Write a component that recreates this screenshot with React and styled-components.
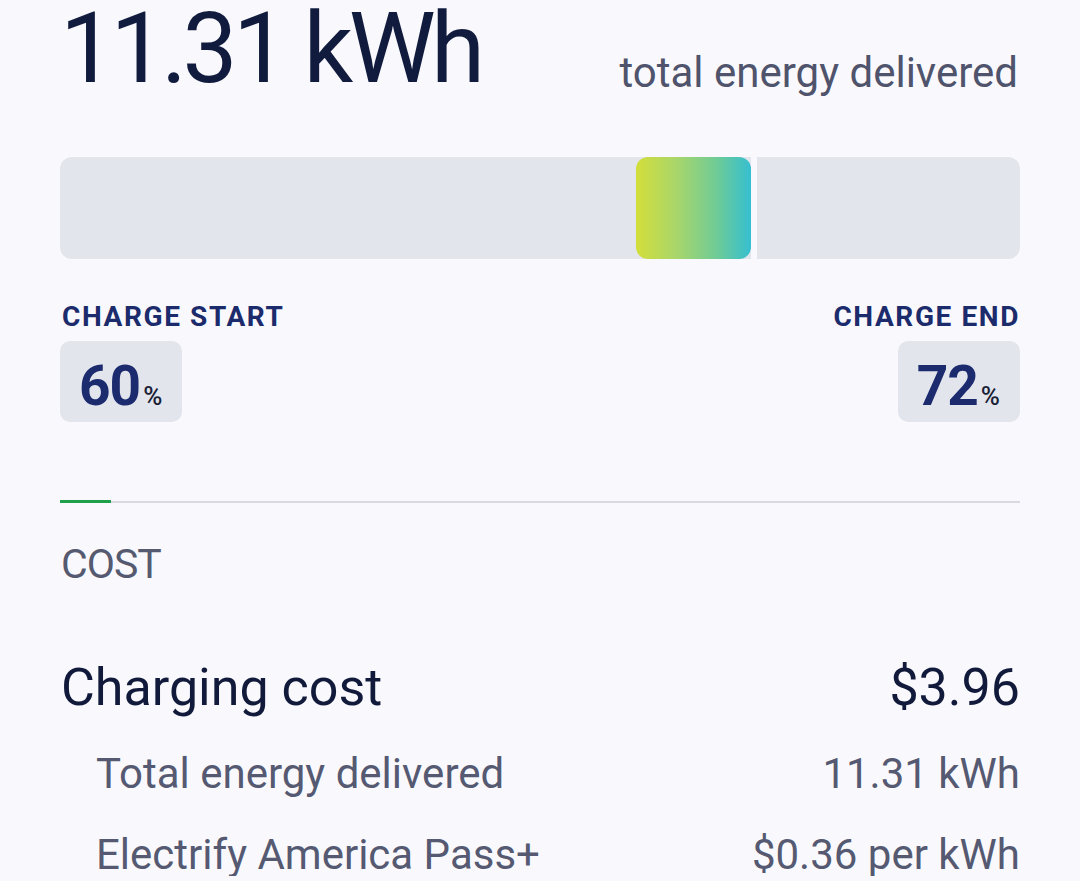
import React from "react";
import styled, { createGlobalStyle } from "styled-components";

const Global = createGlobalStyle`
  html, body { margin: 0; padding: 0; background: #f9f9fd; }
  body { font-family: Roboto, "Noto Sans", "Liberation Sans", sans-serif; overflow: hidden; }
`;

const Page = styled.div`
  padding: 0 60px;
  width: 960px;
  box-sizing: content-box;
`;

const Header = styled.div`
  display: flex;
  justify-content: space-between;
  align-items: flex-start;
`;

const BigValue = styled.div`
  font-size: 98px;
  line-height: 1;
  font-weight: 400;
  letter-spacing: -4.5px;
  color: #111b3d;
`;

const Caption = styled.div`
  font-size: 42px;
  line-height: 1;
  color: #4f546c;
  margin-top: 52px;
  margin-right: 2px;
`;

const Bar = styled.div`
  margin-top: 59px;
  height: 102px;
  border-radius: 12px;
  background: #e3e5ed;
  display: flex;
  overflow: hidden;
`;

const Spacer = styled.div`
  flex: none;
`;

const Fill = styled.div`
  flex: none;
  border-radius: 12px;
  background: linear-gradient(90deg, #d3de3a 0%, #a9d66a 35%, #6fcb96 70%, #36bfd0 100%);
`;

const Marker = styled.div`
  flex: none;
  width: 6px;
  background: #f9f9fd;
`;

const Ends = styled.div`
  display: flex;
  justify-content: space-between;
  margin-top: 44px;
`;

const EndCol = styled.div`
  display: flex;
  flex-direction: column;
  align-items: ${(p) => (p.$right ? "flex-end" : "flex-start")};
  gap: 10px;
`;

const EndLabel = styled.div`
  font-size: 28px;
  line-height: 1;
  font-weight: 700;
  letter-spacing: 1.6px;
  color: #1c2b6b;
  margin-left: ${(p) => (p.$right ? "0" : "2px")};
`;

const Badge = styled.div`
  display: flex;
  align-items: baseline;
  box-sizing: border-box;
  height: 81px;
  padding: 18px 20px 8px 19px;
  border-radius: 10px;
  background: #e3e5ed;
`;

const BadgeNum = styled.span`
  font-size: 55px;
  line-height: 1;
  font-weight: 700;
  letter-spacing: -1px;
  color: #1b2b6e;
`;

const BadgeUnit = styled.span`
  font-size: 26px;
  line-height: 1;
  font-weight: 500;
  color: #1a1f36;
  margin-left: 3px;
`;

const Divider = styled.div`
  display: flex;
  align-items: center;
  height: 3px;
  margin-top: 78px;
`;

const DividerActive = styled.div`
  width: 51px;
  height: 3px;
  background: #21a04b;
`;

const DividerRest = styled.div`
  flex: 1;
  height: 2px;
  background: #d9dae1;
`;

const SectionTitle = styled.div`
  margin-top: 41px;
  font-size: 41px;
  line-height: 1;
  letter-spacing: -1px;
  color: #555a70;
  margin-left: 1px;
`;

const Rows = styled.div`
  margin-top: 77px;
  display: flex;
  flex-direction: column;
  gap: 39px;
`;

const Row = styled.div`
  display: flex;
  justify-content: space-between;
  align-items: baseline;
  font-size: ${(p) => (p.$main ? "52px" : "42px")};
  line-height: 1;
  color: ${(p) => (p.$main ? "#111a3a" : "#555a72")};
  padding-left: ${(p) => (p.$main ? "1px" : "36px")};
`;

const RowLabel = styled.span``;
const RowValue = styled.span``;

const start = 60;
const end = 72;

export default function App() {
  return (
    <>
      <Global />
      <Page>
        <Header>
          <BigValue>11.31 kWh</BigValue>
          <Caption>total energy delivered</Caption>
        </Header>
        <Bar>
          <Spacer style={{ width: `${start}%` }} />
          <Fill style={{ width: `${end - start}%` }} />
          <Marker />
        </Bar>
        <Ends>
          <EndCol>
            <EndLabel>CHARGE START</EndLabel>
            <Badge>
              <BadgeNum>{start}</BadgeNum>
              <BadgeUnit>%</BadgeUnit>
            </Badge>
          </EndCol>
          <EndCol $right>
            <EndLabel $right>CHARGE END</EndLabel>
            <Badge>
              <BadgeNum>{end}</BadgeNum>
              <BadgeUnit>%</BadgeUnit>
            </Badge>
          </EndCol>
        </Ends>
        <Divider>
          <DividerActive />
          <DividerRest />
        </Divider>
        <SectionTitle>COST</SectionTitle>
        <Rows>
          <Row $main>
            <RowLabel>Charging cost</RowLabel>
            <RowValue>$3.96</RowValue>
          </Row>
          <Row>
            <RowLabel>Total energy delivered</RowLabel>
            <RowValue>11.31 kWh</RowValue>
          </Row>
          <Row>
            <RowLabel>Electrify America Pass+</RowLabel>
            <RowValue>$0.36 per kWh</RowValue>
          </Row>
        </Rows>
      </Page>
    </>
  );
}
